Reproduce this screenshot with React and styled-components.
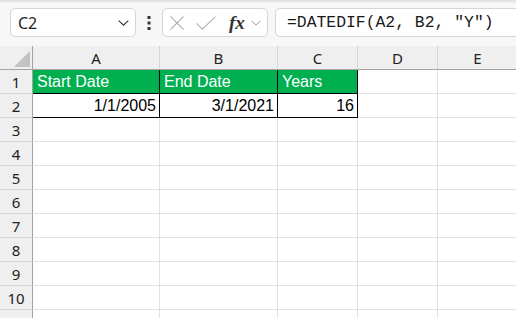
import React from "react";
import styled, { createGlobalStyle } from "styled-components";

const GlobalStyle = createGlobalStyle`
  html, body {
    margin: 0;
    padding: 0;
    background: #fff;
    overflow: hidden;
  }
  * {
    box-sizing: border-box;
  }
`;

const Page = styled.div`
  width: 516px;
  height: 318px;
  overflow: hidden;
  background: #fff;
  font-family: "Noto Sans", "Open Sans", sans-serif;
  color: #222;
`;

const Toolbar = styled.div`
  display: flex;
  align-items: center;
  height: 46px;
  padding: 0 0 1px 10px;
  background: #f7f7f7;
  box-shadow: inset 0 3px 2px -1px #e0e0e0;
`;

const Box = styled.div`
  height: 29px;
  display: flex;
  align-items: center;
  background: #fff;
  border: 1px solid #d6d6d6;
  border-radius: 5px;
`;

const NameBox = styled(Box)`
  width: 126px;
  justify-content: space-between;
  padding: 0 6px 0 7px;
  font-size: 16px;
  color: #1f1f1f;
`;

const Grip = styled.div`
  width: 26px;
  display: flex;
  justify-content: center;
`;

const FxBox = styled(Box)`
  width: 106px;
  padding-left: 7px;
  gap: 12px;
`;

const FxLabel = styled.span`
  font-family: "Liberation Serif", serif;
  font-style: italic;
  font-weight: bold;
  font-size: 19px;
  color: #333;
  margin-left: 1px;
  margin-right: -6px;
  line-height: 1;
`;

const FormulaBar = styled(Box)`
  flex: 1;
  margin-left: 7px;
  margin-right: -20px;
  padding-left: 11px;
  font-family: "Liberation Mono", "DejaVu Sans Mono", monospace;
  font-size: 16.4px;
  color: #1a1a1a;
  white-space: nowrap;
`;

const Sheet = styled.div`
  display: grid;
  grid-template-columns: 33px 127px 118px 80px 80px 80px;
  grid-auto-rows: 24px;
`;

const Corner = styled.div`
  background: #efefef;
  border-right: 1px solid #a3a3a3;
  border-bottom: 1px solid #a3a3a3;
  display: flex;
  justify-content: flex-end;
  align-items: flex-end;
  padding: 0 2px 2px 0;
`;

const Triangle = styled.div`
  width: 0;
  height: 0;
  border-left: 16px solid transparent;
  border-bottom: 16px solid #c2c2c2;
`;

const ColHead = styled.div`
  background: #efefef;
  border-right: 1px solid #d6d6d6;
  border-bottom: 1px solid #a3a3a3;
  display: flex;
  align-items: center;
  justify-content: center;
  font-size: 15px;
`;

const RowHead = styled.div`
  background: #efefef;
  border-right: 1px solid #a3a3a3;
  border-bottom: 1px solid #d6d6d6;
  display: flex;
  align-items: center;
  justify-content: center;
  font-size: 15px;
`;

const Cell = styled.div`
  border-right: 1px solid ${(p) => (p.$boxed ? "#000" : "#e1e1e1")};
  border-bottom: 1px solid ${(p) => (p.$boxed ? "#000" : "#e1e1e1")};
  background: ${(p) => p.$fill || "#fff"};
  color: ${(p) => (p.$fill ? "#fff" : "#000")};
  text-align: ${(p) => (p.$num ? "right" : "left")};
  padding: 0 3px 0 4px;
  font-family: "Liberation Sans", Arial, sans-serif;
  font-size: 16px;
  line-height: 23px;
  white-space: nowrap;
  overflow: hidden;
`;

const GREEN = "#00b050";
const columns = ["A", "B", "C", "D", "E"];
const data = {
  1: [
    { v: "Start Date", fill: GREEN },
    { v: "End Date", fill: GREEN },
    { v: "Years", fill: GREEN },
  ],
  2: [
    { v: "1/1/2005", num: true },
    { v: "3/1/2021", num: true },
    { v: "16", num: true },
  ],
};

const Chevron = ({ w = 11, color = "#333" }) => (
  <svg width={w} height="6" viewBox="0 0 11 6" fill="none">
    <path d="M0.7 0.7 L5.5 5.2 L10.3 0.7" stroke={color} strokeWidth="1.1" />
  </svg>
);

const Dots = () => (
  <svg width="4" height="14" viewBox="0 0 4 14">
    <rect x="0.5" y="0" width="3" height="3" fill="#333" />
    <rect x="0.5" y="5.5" width="3" height="3" fill="#333" />
    <rect x="0.5" y="11" width="3" height="3" fill="#333" />
  </svg>
);

const CancelIcon = () => (
  <svg width="14" height="14" viewBox="0 0 14 14" fill="none">
    <path d="M0.5 0.5 L13.5 13.5 M13.5 0.5 L0.5 13.5" stroke="#b3b3b3" strokeWidth="1.1" />
  </svg>
);

const CheckIcon = () => (
  <svg width="20" height="14" viewBox="0 0 20 14" fill="none">
    <path d="M0.6 7.4 L6.4 13.2 L19.4 0.6" stroke="#b3b3b3" strokeWidth="1.1" />
  </svg>
);

export default function App() {
  const rows = Array.from({ length: 11 }, (_, i) => i + 1);
  return (
    <Page>
      <GlobalStyle />
      <Toolbar>
        <NameBox>
          <span>C2</span>
          <Chevron />
        </NameBox>
        <Grip>
          <Dots />
        </Grip>
        <FxBox>
          <CancelIcon />
          <CheckIcon />
          <FxLabel>fx</FxLabel>
          <Chevron w={10} color="#999" />
        </FxBox>
        <FormulaBar>=DATEDIF(A2, B2, "Y")</FormulaBar>
      </Toolbar>
      <Sheet>
        <Corner>
          <Triangle />
        </Corner>
        {columns.map((c) => (
          <ColHead key={c}>{c}</ColHead>
        ))}
        {rows.map((r) => (
          <React.Fragment key={r}>
            <RowHead>{r}</RowHead>
            {columns.map((c, ci) => {
              const item = data[r] && data[r][ci];
              return (
                <Cell
                  key={c}
                  $boxed={!!item}
                  $fill={item && item.fill}
                  $num={item && item.num}
                >
                  {item ? item.v : ""}
                </Cell>
              );
            })}
          </React.Fragment>
        ))}
      </Sheet>
    </Page>
  );
}
